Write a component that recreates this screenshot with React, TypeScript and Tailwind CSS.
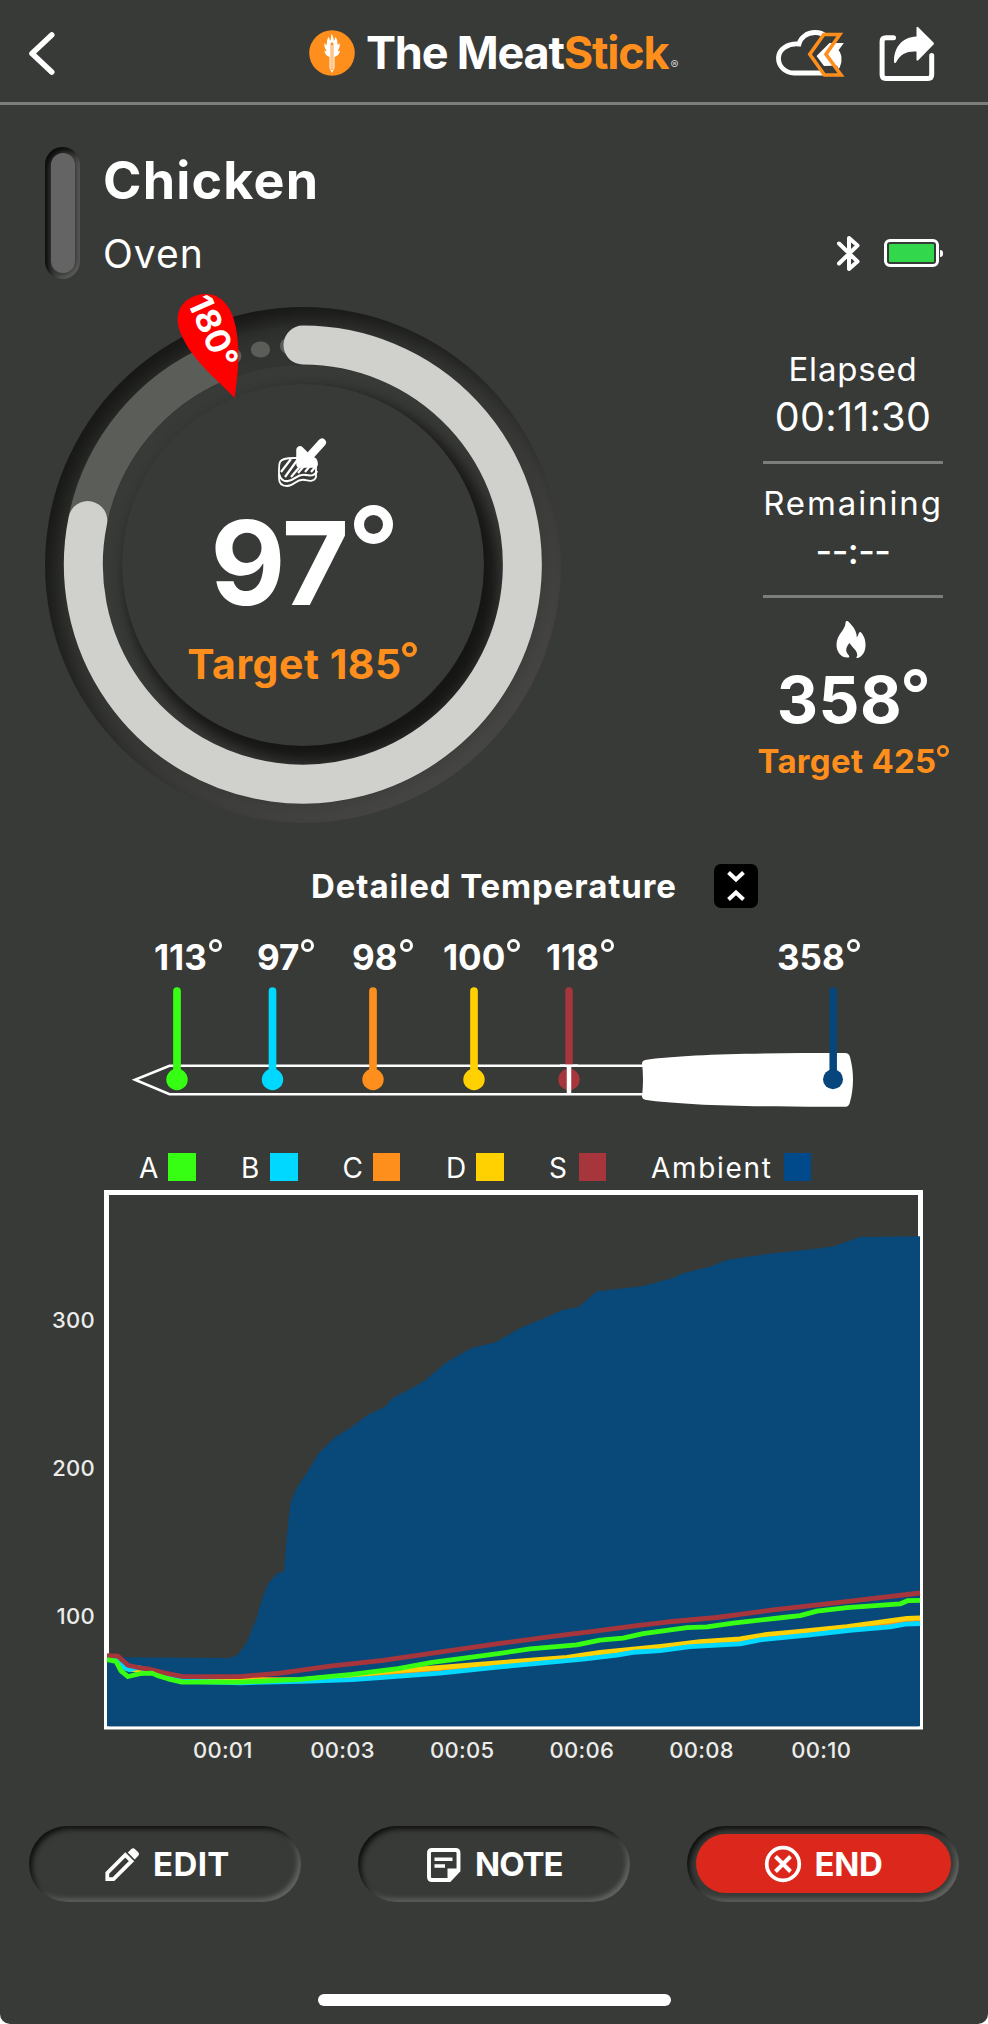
import React from "react";

type Series = { color: string; points: string };

const AREA =
  "107,1603 230,1603.5 238,1600.5 246.7,1590 256.7,1568 263.3,1548 268,1538 276.7,1529 284,1526.7 286.7,1496.7 290.7,1465 296.7,1453 306.7,1440 318.3,1422.7 335,1408 350,1400 368,1388 385,1381 393,1373 406.7,1367 425,1357.7 436.7,1349 448,1340.7 471.7,1329 495,1324 520,1311.5 543,1303 563,1295 578,1293 596.7,1279 643,1274 673,1267 683,1262.7 710,1257 726.7,1251 773,1245 810,1241.7 833,1239 860,1230.7 920,1230 920,1664 107,1664";

const SERIES: Series[] = [
  {
    color: "#ff8f1c",
    points:
      "107,1603 118,1603 126,1611 150,1614.5 168,1619 183,1622.5 240,1622.5 300,1623 350,1619.5 390,1617 440,1613 500,1609.5 567,1605 600,1600.5 663,1595 700,1591 740,1588.5 767,1584.5 800,1582 847,1577.5 887,1573 907,1570 920,1569",
  },
  {
    color: "#ffd100",
    points:
      "107,1604 118,1604 126,1613 150,1616 168,1620 183,1624 240,1624 300,1623 350,1619 390,1615.5 440,1612 500,1607.7 567,1603 600,1598.7 663,1593 700,1589 740,1586.7 767,1582.7 800,1580 847,1575.7 887,1571 907,1568.5 920,1568",
  },
  {
    color: "#00d8ff",
    points:
      "107,1604 118,1604 124,1612 130,1614 138,1612 153,1615 175,1622 182,1624 240,1625.5 310,1624 352,1622.7 380,1621 440,1617 500,1611.5 583,1604.5 617,1601 633,1598.5 660,1597 690,1593.5 740,1591 760,1587.5 810,1583 850,1579 890,1576 905,1573.5 920,1573",
  },
  {
    color: "#a7353c",
    points:
      "107,1601.5 118,1602 128,1610 138,1612 150,1613.5 165,1617 183,1620 240,1620 280,1617 330,1610.7 383,1605.7 443,1598 500,1590.7 556.7,1584 593,1580 636.7,1575 667,1571.7 716.7,1567.7 773,1561 833,1555 880,1550 920,1546",
  },
  {
    color: "#37ff14",
    points:
      "107,1605 116,1606.5 121,1615 128,1620 140,1617.5 152,1617 157,1619 168,1622 182,1625 240,1625 300,1622.5 352,1618 398,1613 432,1607.5 470,1603 500,1599.5 530,1595.5 576.7,1592 600,1587.7 623,1586 643,1582 687,1576.7 707,1576 733,1572.7 783,1567.7 800,1566 817,1562 847,1559 900,1555.7 908,1552.7 920,1552.5",
  },
];

const PINS = [
  { x: 177, color: "#37ff14" },
  { x: 272.5, color: "#00d8ff" },
  { x: 373, color: "#ff8f1c" },
  { x: 474, color: "#ffd100" },
];

const LEGEND = [
  { label: "A", w: "w-[29px]", color: "bg-[#37ff14]" },
  { label: "B", w: "w-[29px]", color: "bg-[#00d8ff]" },
  { label: "C", w: "w-[30px]", color: "bg-[#ff8f1c]" },
  { label: "D", w: "w-[30px]", color: "bg-[#ffd100]" },
  { label: "S", w: "w-[29.500px]", color: "bg-[#a7353c]" },
  { label: "Ambient", w: "w-[132.500px]", color: "bg-[#004a8b]" },
];

function Header() {
  return (
    <header className="flex h-[105px] items-center border-b-[3px] border-[#7c7e7b] pt-[3px]">
      <svg className="ml-[26px] h-[50px] w-[32px]" viewBox="26 27 32 50" fill="none">
        <path d="M51.7 34 32 52.5 51.7 71" stroke="#fff" strokeWidth="5.6" strokeLinecap="round" strokeLinejoin="round" />
      </svg>
      <div className="ml-[251px] flex h-[60px] w-[371px] items-center">
        <svg className="h-[46px] w-[46px] shrink-0" viewBox="0 0 46 46">
          <circle cx="23" cy="23" r="22.8" fill="#ff8f1c" />
          <path
            d="M23 43 20.500 38V27c-3-1-5-3.500-5-6.500 1.200.8 1.700.8 2 .5-1-2.500-2.500-3.500-2-8 1 1.500 1.800 2 2.400 1.800-.3-4 .5-6 2-8 .3 2.500 1 3.500 1.800 3.700.1-2.500.3-4 .9-6.500 1.400 2 2 4 2.200 6.500.9-.6 1.300-1.600 1.500-3.500 1.800 2 2.400 4.500 2.200 7.800.7 0 1.400-.7 2-1.800.8 4-.6 5.500-1.700 8 .5.200 1.200 0 2.100-.5-.2 3-2 5.500-5.400 6.500v11z"
            fill="#fff"
          />
          <path d="M23 38.500V14" stroke="#ff8f1c" strokeWidth="2.800" strokeLinecap="round" />
          <path d="M23 39V15" stroke="#fff" strokeWidth="1" />
        </svg>
        <span className="ml-[11px] text-[45px] leading-[60px] font-bold tracking-[-1.200px] whitespace-nowrap text-white">
          The Meat<span className="text-[#ff8f1c]">Stick</span>
        </span>
        <span className="mt-[25px] ml-[2px] text-[12px] leading-none text-[#cfcfcf]">®</span>
      </div>
      <svg className="ml-[94px] h-[60px] w-[72px]" viewBox="774 22 72 60" fill="none">
        <path
          d="M832 70.500c5-2 8-8 7-15-1-5-5-8-9-9 1-8-5-15-15-15-8 0-14.500 5-16 11.500-11-1-20 5-20.500 13.500-.5 9 7 15.500 15.500 15.500h31"
          stroke="#fff"
          strokeWidth="4.800"
        />
        <path d="M808.500 53.300 823 33.500h17.500L829 49l13 25.500h-18z" fill="#383a37" />
        <path d="M829.500 42h14.300l-6 8.200 2.700 3.500-1.500 10.800-15 .6-7.500-10z" fill="#fff" />
        <path d="M809.800 53.300 823.800 33.500h16L826 53.300 841 74h-16.500z" stroke="#ff8f1c" strokeWidth="3.600" />
      </svg>
      <svg className="ml-[32px] h-[60px] w-[58px]" viewBox="878 22 58 60" fill="none">
        <path
          d="M893.5 36.800h-7.500q-3.900 0-3.900 3.700v33.200q0 3.700 3.700 3.700h42.200q3.700 0 3.700-3.700V54.500"
          stroke="#fff"
          strokeWidth="5"
          strokeLinecap="round"
        />
        <path
          d="M916.500 26.500q.8-1.300 2 0l15 15q1 1 0 2l-15 15.500q-2 1.500-2-.5V50.500c-10-.5-16 2.500-20.500 11-1 1-2 .5-2-1 0-14 8-24.500 22.500-25z"
          fill="#fff"
        />
      </svg>
    </header>
  );
}

function Title() {
  return (
    <section className="flex h-[202px] pt-[42px] pl-[45px]">
      <div className="flex h-[132px] w-[35px] items-center justify-center rounded-full shadow-[inset_4px_4px_5px_#0c0c0b,inset_-3px_-3px_4px_#5a5b58]">
        <div className="h-[120px] w-[24px] rounded-full bg-[#646464]" />
      </div>
      <div className="ml-[23px] w-[600px] pt-[1px] text-white">
        <h1 className="h-[66px] text-[52px] leading-[66px] font-bold tracking-[1.200px]">Chicken</h1>
        <p className="text-[39px] leading-[79px] tracking-[1px]">Oven</p>
      </div>
      <svg className="mt-[84px] ml-[130px] h-[44px] w-[30px]" viewBox="833 231 30 44" fill="none">
        <path d="m839 243.500 18.500 18-8.500 7.500v-31l8.500 7.500-18.500 18" stroke="#fff" strokeWidth="4" strokeLinecap="round" strokeLinejoin="round" />
      </svg>
      <div className="mt-[92px] ml-[21px] flex items-center gap-[1px] self-start">
        <div className="h-[28px] w-[55px] rounded-[6px] border-3 border-white p-[2px]">
          <div className="h-full w-full rounded-[1px] bg-[#32d74b]" />
        </div>
        <div className="h-[7px] w-[3px] rounded-r-full bg-white" />
      </div>
    </section>
  );
}

function Gauge() {
  return (
    <div className="relative ml-[45px] flex h-[516px] w-[516px] items-center justify-center rounded-full shadow-[inset_12px_14px_24px_#161715,inset_-10px_-12px_24px_#4b4a48]">
      <div className="absolute inset-[19px] rounded-full border-[39px] border-[#2c2d2b]/50" />
      <div className="flex h-[362px] w-[362px] flex-col items-center rounded-full bg-[#383a37] pt-[53px] shadow-[9px_11px_14px_5px_#161615]">
        <svg className="h-[52px] w-[52px]" viewBox="278 437 52 52" fill="none">
          <path
            d="M281 462c2-4 9-4 14-4h20c3 1 3 5 2 9v10c-2 5-6 4-11 3-9-2-10 6-18 6-5 0-8-3-8-8v-9c0-3 0-5 1-7z"
            stroke="#fff"
            strokeWidth="1.800"
          />
          <path d="M280 474c1 5 5 8 9 7 8-1 9-8 18-6 5 1 9 1 11-4M282 472l10-13M286 477l13-18M292 477l11-13M299 473l6-7M306 472l5-6M312 472l5-6" stroke="#fff" strokeWidth="2.200" />
          <path d="M323 442.500 304 463.500" stroke="#fff" strokeWidth="8" strokeLinecap="round" />
          <path d="M301 450v14h14z" stroke="#fff" fill="#fff" strokeWidth="7.500" strokeLinecap="round" strokeLinejoin="round" />
        </svg>
        <div className="mt-[9px] mr-[3px] flex h-[130px] text-[116px] leading-[131px] font-bold tracking-[-1.500px] text-white">
          97
          <Degree className="mt-[7px] ml-[6px] h-[39px] w-[39px] border-[10px]" />
        </div>
        <div className="mt-[6px] mr-[2px] flex h-[60px] text-[41px] leading-[60px] font-bold tracking-[0.500px] text-[#ff8f1c]">
          Target 185
          <Degree className="mt-[8px] h-[15px] w-[15px] border-4" />
        </div>
      </div>
      <svg className="absolute -top-[17px] left-0 h-[533px] w-[516px]" viewBox="45 290 516 533" fill="none">
        <path d="M88 519A219.500 219.500 0 0 1 217 362.500" stroke="#5b5d59" strokeWidth="39" />
        <ellipse cx="260.500" cy="349.500" rx="9.700" ry="8" fill="#5b5d59" />
        <circle cx="234" cy="356" r="7.500" fill="#5b5d59" />
        <circle cx="288" cy="346" r="8" fill="#5b5d59" />
        <path d="M303 345.100A219.500 219.500 0 1 1 87.800 520.600" stroke="#d0d0cd" strokeWidth="39" strokeLinecap="round" />
        <path d="M234.500 398C224 385 192 362 180.500 333 170 305 192 294 205 294c17 0 27 13 31 34 5 27 1 52-1.500 70z" fill="#f00" />
        <text transform="translate(187 302) rotate(66)" fill="#fff" fontSize="34" fontWeight="700" fontFamily="Inter, sans-serif">
          180°
        </text>
      </svg>
    </div>
  );
}

function Degree({ className }: { className: string }) {
  return <span className={`box-border shrink-0 rounded-full border-current ${className}`} role="img" aria-label="°" />;
}

function Stats() {
  return (
    <div className="mr-[25px] ml-auto flex w-[220px] flex-col items-center pt-[42px] text-white">
      <p className="text-[33px] leading-[40px] tracking-[0.800px]">Elapsed</p>
      <p className="text-[39.500px] leading-[57px] tracking-[0.300px]">00:11:30</p>
      <div className="mt-[15px] h-[3px] w-[180px] bg-[#7c7e7b]" />
      <p className="mt-[19px] text-[33px] leading-[40px] tracking-[1.900px]">Remaining</p>
      <p className="text-[36px] leading-[56px] font-medium tracking-[-0.500px]">--:--</p>
      <div className="mt-[16px] h-[3px] w-[180px] bg-[#7c7e7b]" />
      <svg className="mt-[23px] -ml-[5px] h-[37px] w-[30px]" viewBox="409 873 87 111">
        <path
          d="M441 873c3 0 30 24 29 50 5-7 5-18 11-17 9 9 16 22 15 42-1 22-14 35-25 36-4 0-2-4 0-6 2-16-12-22-23-39-7 8-14 20-7 31 3 5 8 8 6 12-20 4-38-13-38-38 0-30 26-43 27-65 0-5 3-6 5-6z"
          fill="#fff"
        />
      </svg>
      <div className="mt-[10px] mr-[2px] flex text-[64px] leading-[64px] font-bold tracking-[0.600px]">
        358
        <Degree className="mt-[1px] ml-[2px] h-[23px] w-[23px] border-6" />
      </div>
      <div className="mt-[7px] flex text-[33px] leading-[44px] font-bold tracking-[0.300px] text-[#ff8f1c]">
        Target 425
        <Degree className="mt-[6px] h-[12px] w-[12px] border-[3px]" />
      </div>
    </div>
  );
}

function DetailHeader() {
  return (
    <div className="mt-[41px] flex h-[44px] items-center pl-[311px] text-white">
      <h2 className="w-[403px] pt-[1px] text-[33px] font-bold tracking-[0.900px] whitespace-nowrap">Detailed Temperature</h2>
      <button className="flex h-[44px] w-[44px] items-center justify-center rounded-[7px] bg-black">
        <svg className="h-[34px] w-[24px]" viewBox="0 0 24 34" fill="none" stroke="#fff" strokeWidth="4">
          <path d="m4.500 3.500 7.500 7 7.500-7M4.500 30.500l7.500-7 7.500 7" />
        </svg>
      </button>
    </div>
  );
}

function ProbeTemps() {
  return (
    <div className="mt-[29px] grid h-[40px] grid-cols-[103px_95px_91px_103px_231px_auto] pl-[154px] text-[35px] leading-[40px] font-bold text-white">
      {["113", "97", "98", "100", "118", "358"].map((t) => (
        <div key={t} className="flex">
          {t}
          <Degree className="mt-[2px] ml-[2px] h-[13px] w-[13px] border-[3px]" />
        </div>
      ))}
    </div>
  );
}

function Probe() {
  return (
    <svg className="h-[145px] w-[988px]" viewBox="0 977 988 145" fill="none">
      <path d="M645 1065.700H169.500L135 1079.700l34.500 14.500H645" stroke="#fff" strokeWidth="2.600" />
      {PINS.map((p) => (
        <g key={p.x}>
          <path d={`M${p.x} 991v85`} stroke={p.color} strokeWidth="7.700" strokeLinecap="round" />
          <circle cx={p.x} cy="1079.500" r="10.700" fill={p.color} />
        </g>
      ))}
      <path d="M569 991v74" stroke="#a7353c" strokeWidth="7.500" strokeLinecap="round" />
      <circle cx="569" cy="1079.500" r="10.700" fill="#a7353c" />
      <path d="M560 1065.700h18" stroke="#fff" strokeWidth="2.600" />
      <path d="M569 1065v29" stroke="#fff" strokeWidth="4.500" />
      <path d="M642 1063q0-2 3-3c40-6 120-7 200-7q4 0 5 4c4 15 4 30 0 45q-1 5-5 4.700c-80 .3-160-1-200-7q-3-1-3-3 2-17 0-33.700z" fill="#fff" />
      <path d="M833.200 991v85" stroke="#06467d" strokeWidth="7.500" strokeLinecap="round" />
      <circle cx="833" cy="1079.300" r="10" fill="#06467d" />
    </svg>
  );
}

function Legend() {
  return (
    <div className="mt-[31px] grid h-[28px] grid-cols-[102px_101.500px_103.500px_103px_102px_auto] pl-[139px] text-[28px] leading-[31px] text-white">
      {LEGEND.map((l) => (
        <div key={l.label} className="flex">
          <span className={l.w + " tracking-[1.700px]"}>{l.label}</span>
          <span className={l.color + " h-[27.500px] w-[27.500px]"} />
        </div>
      ))}
    </div>
  );
}

function Chart() {
  return (
    <section className="mt-[9px] text-[22px] font-medium tracking-[0.300px] text-[#ececea]">
      <div className="flex">
        <div className="flex w-[104px] flex-col pt-[56px] pr-[9px]">
          {["300", "200", "100"].map((v) => (
            <span key={v} className="flex h-[148.400px] items-center justify-end">
              {v}
            </span>
          ))}
        </div>
        <svg className="h-[539.600px] w-[819px]" viewBox="104 1189 819 478" preserveAspectRatio="none" fill="none">
          <path d="M104 1189h819v478H104zM109 1193.400v470.700h809v-470.700z" fill="#fff" fillRule="evenodd" />
          <polygon points={AREA} fill="#08497a" />
          {SERIES.map((s) => (
            <polyline key={s.color} points={s.points} stroke={s.color} strokeWidth="4.800" strokeLinejoin="round" vectorEffect="non-scaling-stroke" />
          ))}
        </svg>
      </div>
      <div className="flex pt-[8px] pl-[163px]">
        {["00:01", "00:03", "00:05", "00:06", "00:08", "00:10"].map((v) => (
          <span key={v} className="w-[119.700px] text-center leading-[25px]">
            {v}
          </span>
        ))}
      </div>
    </section>
  );
}

const WELL =
  "flex h-[76px] w-[272px] items-center rounded-full text-[33px] font-bold text-white shadow-[inset_3px_3px_5px_#0f100f,inset_-3px_-3px_5px_#666764]";

function Actions() {
  return (
    <div className="mt-[63.400px] flex gap-[57px] pl-[29px]">
      <button className={WELL + " pl-[74px]"}>
        <svg className="h-[38px] w-[38px]" viewBox="103 1845 38 38" fill="none">
          <path d="M107.300 1873v6.200h6.200l18-18-6.200-6.200z" stroke="#fff" strokeWidth="3.800" />
          <path d="m127.800 1852.500 3.300-3.300q2-2 4 0l2.900 2.900q2 2 0 4l-3.300 3.300z" fill="#fff" />
        </svg>
        <span className="ml-[12px] pt-[1px] tracking-[0.400px]">EDIT</span>
      </button>
      <button className={WELL + " pl-[67px]"}>
        <svg className="h-[38px] w-[38px]" viewBox="425 1845 38 38" fill="none">
          <path d="M432 1850h23.500q3 0 3 3v17.500l-9 9.500H432q-3 0-3-3v-24q0-3 3-3z" stroke="#fff" strokeWidth="3.900" />
          <path d="M434.500 1859.200h18M434.500 1866h10.500" stroke="#fff" strokeWidth="3.600" />
          <path d="M447.500 1881v-12.500H460z" fill="#fff" />
        </svg>
        <span className="ml-[12px] pt-[1px] tracking-[-1px]">NOTE</span>
      </button>
      <button className={WELL + " justify-center"}>
        <span className="flex h-[59px] w-[255px] items-center rounded-full bg-[#db271c] pl-[67px]">
          <svg className="h-[40px] w-[40px]" viewBox="0 0 40 40" fill="none" stroke="#fff">
            <circle cx="20" cy="20" r="16.300" strokeWidth="3.700" />
            <path d="m12.500 12.500 15 15m0-15-15 15" strokeWidth="4" />
          </svg>
          <span className="ml-[12px] pt-[1px] tracking-[-0.300px]">END</span>
        </span>
      </button>
    </div>
  );
}

export default function App() {
  return (
    <main className="flex h-[2024px] w-[988px] flex-col overflow-hidden bg-white font-['Inter',sans-serif]">
      <div className="h-full rounded-b-[10px] bg-[#383a37]">
        <Header />
        <Title />
        <section className="flex h-[516px]">
          <Gauge />
          <Stats />
        </section>
        <DetailHeader />
        <ProbeTemps />
        <Probe />
        <Legend />
        <Chart />
        <Actions />
        <div className="mx-auto mt-[92px] h-[12px] w-[353px] rounded-full bg-white" />
      </div>
    </main>
  );
}
